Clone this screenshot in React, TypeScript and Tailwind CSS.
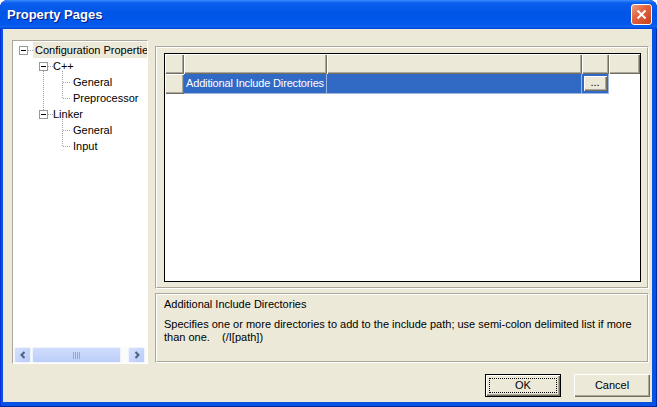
import React from 'react';

const raised =
  'bg-[#ECE9D8] shadow-[inset_1px_1px_0_#ffffff,inset_-1px_-1px_0_#716f64,inset_-2px_-2px_0_#aca899]';
const blueCell = 'h-full bg-[#316AC5] border-r border-b border-[#9fb6e3]';

function TreeLines() {
  return (
    <svg className="absolute left-0 top-0 pointer-events-none" width="134" height="120">
      <g stroke="#a0a0a0" strokeDasharray="1 1" strokeWidth="1" fill="none">
        <line x1="15" y1="9.5" x2="21" y2="9.5" />
        <line x1="35" y1="25.5" x2="40" y2="25.5" />
        <line x1="35" y1="73.5" x2="40" y2="73.5" />
        <line x1="30.5" y1="30" x2="30.5" y2="69" />
        <line x1="49.5" y1="30" x2="49.5" y2="58" />
        <line x1="50" y1="41.5" x2="58" y2="41.5" />
        <line x1="50" y1="57.5" x2="58" y2="57.5" />
        <line x1="49.5" y1="78" x2="49.5" y2="106" />
        <line x1="50" y1="89.5" x2="58" y2="89.5" />
        <line x1="50" y1="105.5" x2="58" y2="105.5" />
      </g>
      <ExpandBox x={6} y={5} />
      <ExpandBox x={26} y={21} />
      <ExpandBox x={26} y={69} />
    </svg>
  );
}

function ExpandBox({ x, y }: { x: number; y: number }) {
  return (
    <g>
      <rect x={x + 0.5} y={y + 0.5} width="8" height="8" fill="#ffffff" stroke="#919b9c" />
      <line x1={x + 2} y1={y + 4.5} x2={x + 7} y2={y + 4.5} stroke="#000000" />
    </g>
  );
}

function ScrollArrow({ dir }: { dir: 'left' | 'right' }) {
  return (
    <div className="w-[17px] h-[16px] rounded-[2px] border border-[#eef3fe] bg-[linear-gradient(135deg,#d6e2fd,#b8cbf8)] flex items-center justify-center">
      <svg width="8" height="8" viewBox="0 0 8 8">
        <path
          d={dir === 'left' ? 'M5.5 1 L2.5 4 L5.5 7' : 'M2.5 1 L5.5 4 L2.5 7'}
          stroke="#4d6185"
          strokeWidth="2"
          fill="none"
        />
      </svg>
    </div>
  );
}

function TreeRow({ pl, label, selected }: { pl: string; label: string; selected?: boolean }) {
  return (
    <div className={`h-[16px] flex items-center whitespace-nowrap ${pl}`}>
      <span className={`h-[16px] leading-[16px] px-[2px] ${selected ? 'bg-[#ECE9D8] flex-1' : ''}`}>{label}</span>
    </div>
  );
}

function Etched({ className, children }: { className: string; children?: React.ReactNode }) {
  return (
    <div className={`border-t border-l border-[#aca899] border-r-white border-b-white border-r border-b ${className}`}>
      <div className="h-full border-t border-l border-white border-r border-b border-r-[#aca899] border-b-[#aca899]">
        {children}
      </div>
    </div>
  );
}

export default function App() {
  return (
    <div className="w-[657px] h-[407px] bg-white font-['Liberation_Sans',Arial,sans-serif] text-[11px] text-black">
      <div className="w-full h-full flex flex-col rounded-t-[8px] overflow-hidden bg-[#0552e4] shadow-[inset_0_-1px_0_#002a9e,inset_1px_0_0_#0831d9,inset_-1px_0_0_#002a9e]">
        {/* title bar */}
        <div className="h-[29px] flex items-center justify-between pl-[7px] pr-[5px] bg-[linear-gradient(to_bottom,#3c8dfb_0%,#0a5fef_10%,#0055e6_45%,#0058ec_85%,#0a62f2_92%,#003fd4_100%)]">
          <span className="text-white font-bold text-[13px] [text-shadow:1px_1px_0_#0a1883]">Property Pages</span>
          <div className="w-[21px] h-[21px] rounded-[3px] border border-white bg-[linear-gradient(135deg,#f0a084_0%,#e2643f_40%,#c8401c_100%)] flex items-center justify-center">
            <svg width="11" height="11" viewBox="0 0 11 11">
              <path d="M1.5 1.5 L9.5 9.5 M9.5 1.5 L1.5 9.5" stroke="#ffffff" strokeWidth="2" />
            </svg>
          </div>
        </div>

        {/* body */}
        <div className="flex-1 ml-[3px] mr-[5px] mb-[5px] bg-[#ECE9D8] pt-[11px] pl-[9px] pr-[2px] flex flex-col">
          <div className="flex">
            {/* tree */}
            <div className="w-[136px] h-[324px] bg-white border-t border-l border-[#aca899] border-r border-b border-r-white border-b-white flex flex-col">
              <div className="relative flex-1 pt-[1px] overflow-hidden">
                <TreeLines />
                <TreeRow pl="pl-[20px]" label="Configuration Properties" selected />
                <TreeRow pl="pl-[38px]" label="C++" />
                <TreeRow pl="pl-[58px]" label="General" />
                <TreeRow pl="pl-[58px]" label="Preprocessor" />
                <TreeRow pl="pl-[38px]" label="Linker" />
                <TreeRow pl="pl-[58px]" label="General" />
                <TreeRow pl="pl-[58px]" label="Input" />
              </div>
              <div className="h-[16px] flex bg-[#fbfbf8] pl-[1px] pr-[2px]">
                <ScrollArrow dir="left" />
                <div className="ml-[1px] w-[89px] h-[16px] rounded-[2px] border border-[#eef3fe] bg-[linear-gradient(to_bottom,#cfdcfd,#bccff9)] flex items-center justify-center gap-[1px]">
                  <span className="w-[1px] h-[7px] bg-[#8ea7e6]" />
                  <span className="w-[1px] h-[7px] bg-[#8ea7e6]" />
                  <span className="w-[1px] h-[7px] bg-[#8ea7e6]" />
                  <span className="w-[1px] h-[7px] bg-[#8ea7e6]" />
                </div>
                <div className="flex-1" />
                <ScrollArrow dir="right" />
              </div>
            </div>

            {/* right column */}
            <div className="ml-[7px] mt-[6px] w-[494px] flex flex-col">
              <Etched className="h-[243px]">
                <div className="pl-[7px] pt-[5px]">
                  <div className="w-[477px] h-[229px] border border-black bg-white">
                    <div className="flex h-[20px]">
                      <div className={`w-[19px] h-full ${raised}`} />
                      <div className={`w-[143px] h-full ${raised}`} />
                      <div className={`w-[255px] h-full ${raised}`} />
                      <div className={`w-[27px] h-full ${raised}`} />
                      <div className={`w-[31px] h-full ${raised}`} />
                    </div>
                    <div className="flex h-[20px]">
                      <div className={`w-[19px] h-full ${raised}`} />
                      <div className={`w-[143px] ${blueCell} text-white pl-[2px] tracking-[-0.15px] flex items-center whitespace-nowrap overflow-hidden`}>
                        Additional Include Directories
                      </div>
                      <div className={`w-[255px] ${blueCell}`} />
                      <div className={`w-[27px] ${blueCell} flex items-center justify-center`}>
                        <div className={`w-[23px] h-[15px] ${raised} flex items-center justify-center leading-none pb-[3px]`}>
                          ...
                        </div>
                      </div>
                    </div>
                  </div>
                </div>
              </Etched>
              <Etched className="mt-[4px] h-[70px]">
                <div className="pl-[7px] pt-[3px] leading-[13px] whitespace-nowrap">
                  <div>Additional Include Directories</div>
                  <div className="mt-[7px]">
                    Specifies one or more directories to add to the include path; use semi-colon delimited list if more
                    <br />
                    than one.&nbsp;&nbsp;&nbsp; (/I[path])
                  </div>
                </div>
              </Etched>
            </div>
          </div>

          {/* buttons */}
          <div className="mt-[10px] flex justify-end gap-[13px]">
            <button className="w-[76px] h-[23px] border border-black bg-[#ECE9D8] p-0">
              <div className="w-full h-full shadow-[inset_1px_1px_0_#ffffff,inset_-1px_-1px_0_#716f64,inset_-2px_-2px_0_#aca899] p-[3px]">
                <div className="w-full h-full border border-dotted border-black flex items-center justify-center">OK</div>
              </div>
            </button>
            <button className={`w-[76px] h-[23px] ${raised} flex items-center justify-center`}>Cancel</button>
          </div>
        </div>
      </div>
    </div>
  );
}
